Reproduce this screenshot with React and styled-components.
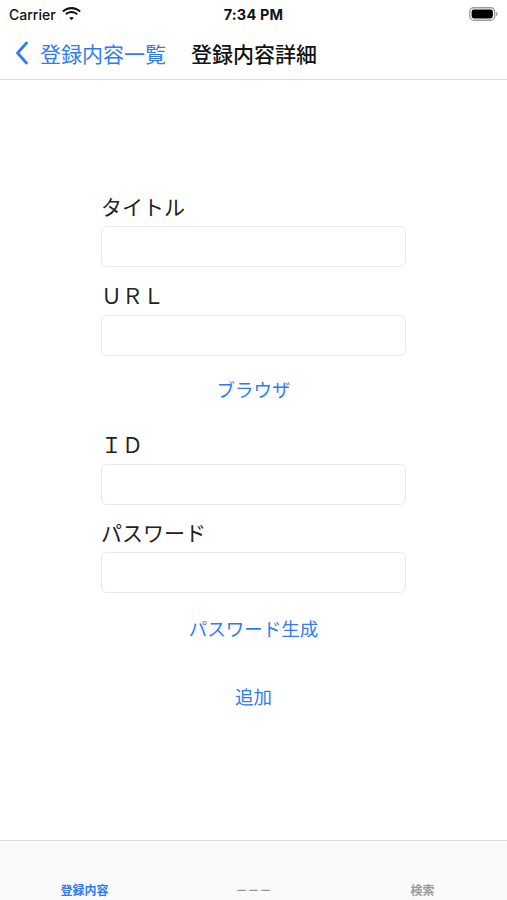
import React from "react";
import styled, { createGlobalStyle } from "styled-components";

const Global = createGlobalStyle`
  html, body { margin: 0; padding: 0; background: #ffffff; }
  body { font-family: "Noto Sans CJK JP", "Noto Sans", sans-serif; -webkit-font-smoothing: antialiased; }
  * { box-sizing: border-box; }
`;

const BLUE = "#2f7bf5";

const Screen = styled.div`
  width: 507px;
  height: 900px;
  display: flex;
  flex-direction: column;
  background: #ffffff;
  overflow: hidden;
`;

const StatusBar = styled.div`
  height: 28px;
  display: grid;
  grid-template-columns: 1fr auto 1fr;
  align-items: center;
  padding: 0 9px 0 9px;
  font-family: Inter, "Liberation Sans", sans-serif;
  font-size: 14px;
  color: #111;
`;

const StatusLeft = styled.div`
  display: flex;
  align-items: center;
  gap: 6px;
  font-weight: 500;
`;

const StatusTime = styled.div`
  font-weight: 700;
  font-size: 14.5px;
  letter-spacing: 0.2px;
`;

const StatusRight = styled.div`
  display: flex;
  justify-content: flex-end;
  align-items: center;
`;

const NavBar = styled.div`
  height: 52px;
  display: flex;
  align-items: center;
  padding: 0 0 2px 15px;
  border-bottom: 1px solid #dcdcdc;
  background: #ffffff;
`;

const BackButton = styled.div`
  display: flex;
  align-items: center;
  gap: 11px;
  color: ${BLUE};
  font-size: 21px;
  margin-right: 25px;
`;

const NavTitle = styled.div`
  font-size: 21px;
  font-weight: 500;
  color: #111;
`;

const Main = styled.main`
  flex: 1;
  display: flex;
  justify-content: center;
  padding-top: 115px;
`;

const Form = styled.div`
  width: 305px;
  display: flex;
  flex-direction: column;
`;

const Label = styled.div`
  font-size: 21px;
  line-height: 22px;
  color: #222;
  margin-top: ${(p) => p.$gap || 0}px;
  margin-bottom: 9px;
`;

const Field = styled.div`
  height: 41px;
  border: 1px solid #e9e9e9;
  border-radius: 6px;
  background: #fff;
`;

const LinkButton = styled.div`
  align-self: center;
  color: ${BLUE};
  font-size: 18.5px;
  line-height: 22px;
  margin-top: ${(p) => p.$gap}px;
`;

const TabBar = styled.nav`
  height: 60px;
  border-top: 1px solid #dcdcdc;
  background: #fafafa;
  display: grid;
  grid-template-columns: repeat(3, 1fr);
  align-items: end;
  padding-bottom: 2px;
`;

const TabItem = styled.div`
  text-align: center;
  font-size: 12px;
  font-weight: 600;
  line-height: 16px;
  color: ${(p) => (p.$active ? BLUE : "#9a9a9a")};
`;

const Wifi = () => (
  <svg width="19" height="14" viewBox="0 0 19 14">
    <path d="M9.5 2.2c3 0 5.8 1.1 7.9 3.1l1.4-1.5C16.3 1.4 13 0 9.5 0S2.7 1.4.2 3.8l1.4 1.5c2.1-2 4.9-3.1 7.9-3.1z" fill="#111" />
    <path d="M9.5 6.1c1.9 0 3.6.7 4.9 1.9l1.4-1.5C14.1 4.9 11.9 4 9.5 4S4.9 4.9 3.2 6.5L4.6 8c1.3-1.2 3-1.9 4.9-1.9z" fill="#111" />
    <path d="M9.5 9.9c.9 0 1.7.3 2.3.9L9.5 13.3 7.2 10.8c.6-.6 1.4-.9 2.3-.9z" fill="#111" />
  </svg>
);

const Battery = () => (
  <svg width="29" height="14" viewBox="0 0 29 14">
    <rect x="0.75" y="0.75" width="25" height="12.5" rx="4" fill="none" stroke="#9a9a9a" strokeWidth="1.3" />
    <rect x="2.6" y="2.6" width="21.3" height="8.8" rx="2.4" fill="#000" />
    <path d="M27.2 4.8c.9.3 1.4 1.2 1.4 2.2s-.5 1.9-1.4 2.2z" fill="#9a9a9a" />
  </svg>
);

const Chevron = () => (
  <svg width="14" height="24" viewBox="0 0 14 24">
    <path d="M11.5 2L2.5 12l9 10" fill="none" stroke={BLUE} strokeWidth="2.8" strokeLinecap="round" strokeLinejoin="round" />
  </svg>
);

export default function App() {
  return (
    <>
      <Global />
      <Screen>
        <StatusBar>
          <StatusLeft>
            Carrier
            <Wifi />
          </StatusLeft>
          <StatusTime>7:34 PM</StatusTime>
          <StatusRight>
            <Battery />
          </StatusRight>
        </StatusBar>
        <NavBar>
          <BackButton>
            <Chevron />
            登録内容一覧
          </BackButton>
          <NavTitle>登録内容詳細</NavTitle>
        </NavBar>
        <Main>
          <Form>
            <Label>タイトル</Label>
            <Field />
            <Label $gap={17}>ＵＲＬ</Label>
            <Field />
            <LinkButton $gap={22}>ブラウザ</LinkButton>
            <Label $gap={33}>ＩＤ</Label>
            <Field />
            <Label $gap={16}>パスワード</Label>
            <Field />
            <LinkButton $gap={24}>パスワード生成</LinkButton>
            <LinkButton $gap={46}>追加</LinkButton>
          </Form>
        </Main>
        <TabBar>
          <TabItem $active>登録内容</TabItem>
          <TabItem>－－－</TabItem>
          <TabItem>検索</TabItem>
        </TabBar>
      </Screen>
    </>
  );
}
